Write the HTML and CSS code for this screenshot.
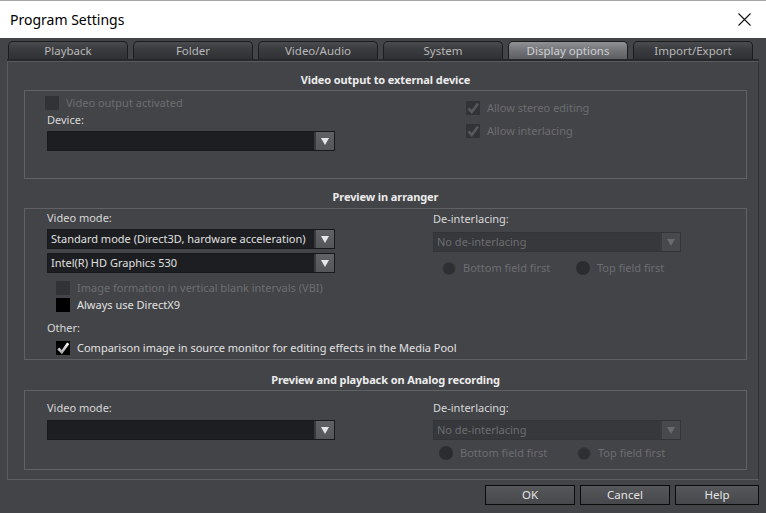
FILE: index.html
```html
<!DOCTYPE html>
<html>
<head>
<meta charset="utf-8">
<link rel="stylesheet" href="styles.css">
</head>
<body>
<div class="window">
  <div class="titlebar">
    <span class="title">Program Settings</span>
    <svg class="close" width="13" height="13" viewBox="0 0 13 13"><path d="M0.5 0.5L12.5 12.5M12.5 0.5L0.5 12.5" stroke="#111" stroke-width="1.1" fill="none"/></svg>
  </div>
  <div class="main">
    <div class="tabs">
      <div class="tab">Playback</div>
      <div class="tab">Folder</div>
      <div class="tab">Video/Audio</div>
      <div class="tab">System</div>
      <div class="tab active">Display options</div>
      <div class="tab">Import/Export</div>
    </div>
    <div class="panel">
      <div class="heading h1">Video output to external device</div>
      <div class="group g1">
        <div class="col">
          <div class="check disabled shift"><span class="box"></span><span>Video output activated</span></div>
          <div class="label lbl-device">Device:</div>
          <div class="select sel-device"><span class="val"></span><span class="arrow"><i></i></span></div>
        </div>
        <div class="col col-r1">
          <div class="check disabled"><span class="box"><svg width="14" height="14" viewBox="0 0 14 14"><path d="M2.5 7.5L5.8 11L12 2.5" stroke="#57585b" stroke-width="2.6" fill="none"/></svg></span><span>Allow stereo editing</span></div>
          <div class="check disabled gap9"><span class="box"><svg width="14" height="14" viewBox="0 0 14 14"><path d="M2.5 7.5L5.8 11L12 2.5" stroke="#57585b" stroke-width="2.6" fill="none"/></svg></span><span>Allow interlacing</span></div>
        </div>
      </div>

      <div class="heading h2">Preview in arranger</div>
      <div class="group g2">
        <div class="col col-l2">
          <div class="label">Video mode:</div>
          <div class="select m4"><span class="val">Standard mode (Direct3D, hardware acceleration)</span><span class="arrow"><i></i></span></div>
          <div class="select m4"><span class="val">Intel(R) HD Graphics 530</span><span class="arrow"><i></i></span></div>
          <div class="check disabled indent m8"><span class="box"></span><span>Image formation in vertical blank intervals (VBI)</span></div>
          <div class="check indent m3"><span class="box black"></span><span>Always use DirectX9</span></div>
          <div class="label m9">Other:</div>
          <div class="check indent m6"><span class="box black"><svg width="14" height="14" viewBox="0 0 14 14"><defs><linearGradient id="ck" x1="0" y1="0" x2="0" y2="1"><stop offset="0" stop-color="#ffffff"/><stop offset="1" stop-color="#a9a9a9"/></linearGradient></defs><path d="M2.3 7.6L5.8 11.2L12.2 2.3" stroke="url(#ck)" stroke-width="2.8" fill="none"/></svg></span><span>Comparison image in source monitor for editing effects in the Media Pool</span></div>
        </div>
        <div class="col col-r2">
          <div class="label">De-interlacing:</div>
          <div class="select disabled m6"><span class="val">No de-interlacing</span><span class="arrow"><i></i></span></div>
          <div class="radios r2">
            <div class="radio-item w134"><span class="radio on"></span><span>Bottom field first</span></div>
            <div class="radio-item"><span class="radio"></span><span>Top field first</span></div>
          </div>
        </div>
      </div>

      <div class="heading h3">Preview and playback on Analog recording</div>
      <div class="group g3">
        <div class="col col-l3">
          <div class="label">Video mode:</div>
          <div class="select m5"><span class="val"></span><span class="arrow"><i></i></span></div>
        </div>
        <div class="col col-l3">
          <div class="label">De-interlacing:</div>
          <div class="select disabled m5"><span class="val">No de-interlacing</span><span class="arrow"><i></i></span></div>
          <div class="radios r3">
            <div class="radio-item w138"><span class="radio"></span><span>Bottom field first</span></div>
            <div class="radio-item"><span class="radio on"></span><span>Top field first</span></div>
          </div>
        </div>
      </div>
    </div>
    <div class="buttons">
      <div class="btn w90">OK</div>
      <div class="btn w90">Cancel</div>
      <div class="btn w84">Help</div>
    </div>
  </div>
</div>
</body>
</html>
```

FILE: styles.css
```css
* { box-sizing: border-box; }
html, body { margin: 0; padding: 0; }
body {
  font-family: "Noto Sans", "Open Sans", sans-serif;
  font-size: 11px;
  color: #d6d6d6;
  background: #434448;
}
.window {
  width: 766px;
  height: 513px;
  display: flex;
  flex-direction: column;
  background: #434448;
  overflow: hidden;
}
.titlebar {
  height: 38px;
  flex: none;
  background: #ffffff;
  border-top: 1px solid #a6a6a6;
  display: flex;
  align-items: center;
  justify-content: space-between;
  padding: 0 15px 1px 10px;
}
.title {
  font-size: 14px;
  color: #000;
}
.close { display: block; }

.main {
  flex: 1;
  display: flex;
  flex-direction: column;
}
.tabs {
  margin: 3px 7px 0 7px;
  padding-left: 1px;
  display: flex;
  gap: 5px;
  border-bottom: 2px solid #27282b;
}
.tab {
  width: 120px;
  height: 18px;
  border: 1px solid #1b1c1e;
  border-bottom: none;
  border-radius: 5px 5px 0 0;
  background: linear-gradient(#4b4c50 0%, #3b3c40 40%, #303134 100%);
  color: #b8b8b8;
  text-align: center;
  line-height: 17px;
  font-size: 11.5px;
}
.tab.active {
  background: linear-gradient(#8f9195 0%, #74767a 45%, #5c5e62 100%);
  color: #cfd0d2;
}
.panel {
  margin: 0 7px;
  height: 419px;
  border: 1px solid #5a5b5f;
  border-right-color: #2f3033;
  border-bottom-color: #5d5e62;
  padding: 0 11px 0 16px;
}
.heading {
  height: 16px;
  line-height: 16px;
  text-align: center;
  font-weight: bold;
  color: #ececec;
  font-size: 11px;
  letter-spacing: -0.1px;
}
.h1 { margin-top: 10px; }
.h2 { margin-top: 10px; }
.h3 { margin-top: 12px; }
.group {
  border: 1px solid #606165;
  display: grid;
  grid-template-columns: 288px 248px;
  column-gap: 98px;
  padding-left: 22px;
}
.g1 { margin-top: 2px; height: 89px; padding-top: 5px; }
.g2 { margin-top: 3px; height: 152px; padding-top: 2px; }
.g3 { margin-top: 2px; height: 80px; padding-top: 10px; }

.col { display: flex; flex-direction: column; }
.col-r1 { padding-top: 5px; padding-left: 33px; }
.col-r2 { padding-top: 1px; }

.label {
  height: 14px;
  line-height: 14px;
  color: #d8d8d8;
  white-space: nowrap;
}
.lbl-device { margin-top: 3px; }
.sel-device { margin-top: 4px; }

.check {
  display: flex;
  align-items: center;
  gap: 7px;
  height: 14px;
  line-height: 14px;
  color: #e2e2e2;
  white-space: nowrap;
}
.check.disabled { color: #6c6d70; }
.check.shift { margin-left: -2px; }
.check.indent { margin-left: 9px; }
.box {
  width: 14px;
  height: 14px;
  flex: none;
  background: #323336;
  display: block;
}
.box svg { display: block; }
.box.black { background: #000; }
.gap9 { margin-top: 9px; }
.m3 { margin-top: 3px; }
.m4 { margin-top: 4px; }
.m5 { margin-top: 5px; }
.m6 { margin-top: 6px; }
.m8 { margin-top: 8px; }
.m9 { margin-top: 9px; }

.select {
  height: 20px;
  display: flex;
  background: #1d1e21;
  border: 1px solid #18191b;
}
.select .val {
  flex: 1;
  padding-left: 3px;
  line-height: 18px;
  color: #e0e0e0;
  white-space: nowrap;
  overflow: hidden;
}
.select .arrow {
  width: 20px;
  flex: none;
  background: linear-gradient(#606165, #55565a);
  border-left: 2px solid #38393c;
  display: flex;
  align-items: center;
  justify-content: center;
}
.select .arrow i {
  display: block;
  width: 0;
  height: 0;
  border-left: 4px solid transparent;
  border-right: 4px solid transparent;
  border-top: 7px solid #e6e6e6;
}
.select.disabled { background: #37383b; border-color: #333437; }
.select.disabled .val { color: #6c6d70; }
.select.disabled .arrow { background: #48494c; border-left-color: #3a3b3e; }
.select.disabled .arrow i { border-top-color: #6a6b6e; }

.radios {
  display: flex;
  height: 14px;
}
.r2 { margin-top: 9px; padding-left: 9px; }
.r3 { margin-top: 6px; padding-left: 6px; }
.radio-item {
  display: flex;
  align-items: center;
  gap: 7px;
  color: #6c6d70;
  line-height: 14px;
  white-space: nowrap;
}
.w134 { width: 134px; }
.w138 { width: 138px; }
.radio {
  width: 14px;
  height: 14px;
  border-radius: 50%;
  background: #2b2c2f;
  display: block;
  flex: none;
}
.radio.on {
  background: radial-gradient(circle at 50% 55%, #2e2f32 0%, #2e2f32 50%, #4a4b4f 75%, #55565a 100%);
}

.buttons {
  display: flex;
  justify-content: flex-end;
  gap: 5px;
  padding-right: 7px;
  margin-top: 5px;
}
.btn {
  height: 20px;
  border: 1px solid #0b0b0c;
  background: linear-gradient(#56575b, #47484c);
  color: #e4e4e4;
  text-align: center;
  line-height: 18px;
  font-size: 11.5px;
}
.w90 { width: 90px; }
.w84 { width: 84px; }
```
